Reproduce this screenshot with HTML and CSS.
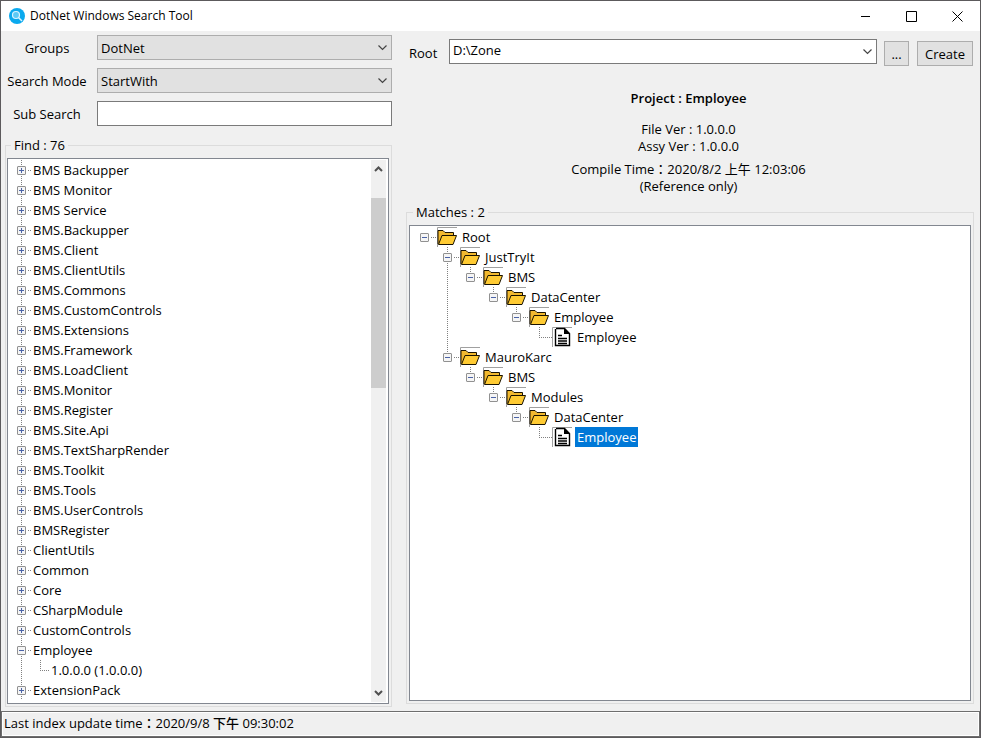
FILE: index.html
```html
<!DOCTYPE html>
<html lang="zh-Hant">
<head>
<meta charset="utf-8">
<title>DotNet Windows Search Tool</title>
<link rel="stylesheet" href="styles.css">
</head>
<body>
<svg class="defs" aria-hidden="true">
  <symbol id="folder" viewBox="0 0 20 20">
    <path d="M0.5 20V0.5H20" fill="none" stroke="#a0a0a0"/>
    <path d="M1 17V3.5H6L8 5.5H16.5V8" fill="#f2b92f" stroke="#1a1300"/>
    <path d="M1.500 17.500L5 8.500H19.500L16 17.500Z" fill="#ffcb33" stroke="#1a1300"/>
  </symbol>
  <symbol id="doc" viewBox="0 0 20 20">
    <path d="M0.5 20V0.5H20" fill="none" stroke="#a0a0a0"/>
    <path d="M4 1.5H12.5L17.5 6.5V18.5H3.5V2" fill="#fff" stroke="#000" stroke-width="1.4"/>
    <path d="M12 1V7H18Z" fill="#000"/>
    <path d="M6 8.5H10M6 11.5H15M6 14H15M6 16.500H15" stroke="#000" stroke-width="1.5"/>
  </symbol>
</svg>
<div class="window">
  <header class="titlebar">
    <svg class="app-icon" viewBox="0 0 16 16"><circle cx="8" cy="8" r="8" fill="#0aa9ee"/><circle cx="7" cy="7" r="3.5" fill="#5cc9f5" stroke="#d8f3ff" stroke-width="1.2"/><path d="M9.5 9.5L13 13" stroke="#d8f3ff" stroke-width="1.5"/></svg>
    <h1>DotNet Windows Search Tool</h1>
    <button class="caption" aria-label="Minimize"><svg viewBox="0 0 11 11"><path d="M1 5.5H10"/></svg></button>
    <button class="caption" aria-label="Maximize"><svg viewBox="0 0 11 11"><path d="M.5 .5H10.5V10.5H.5Z"/></svg></button>
    <button class="caption" aria-label="Close"><svg viewBox="0 0 11 11"><path d="M.5 .5L10.5 10.5M10.5 .5L.5 10.5"/></svg></button>
  </header>
  <main>
    <section class="left">
      <div class="filters">
        <label for="groups">Groups</label>
        <select id="groups"><option>DotNet</option></select>
        <label for="mode">Search Mode</label>
        <select id="mode"><option>StartWith</option></select>
        <label for="sub">Sub Search</label>
        <input id="sub" type="text">
      </div>
      <fieldset>
        <legend>Find : 76</legend>
        <div class="panel">
          <ul class="tree projects">
            <li><div class="row"><button class="toggle plus" aria-label="Expand"></button><span>BMS Backupper</span></div></li>
            <li><div class="row"><button class="toggle plus" aria-label="Expand"></button><span>BMS Monitor</span></div></li>
            <li><div class="row"><button class="toggle plus" aria-label="Expand"></button><span>BMS Service</span></div></li>
            <li><div class="row"><button class="toggle plus" aria-label="Expand"></button><span>BMS.Backupper</span></div></li>
            <li><div class="row"><button class="toggle plus" aria-label="Expand"></button><span>BMS.Client</span></div></li>
            <li><div class="row"><button class="toggle plus" aria-label="Expand"></button><span>BMS.ClientUtils</span></div></li>
            <li><div class="row"><button class="toggle plus" aria-label="Expand"></button><span>BMS.Commons</span></div></li>
            <li><div class="row"><button class="toggle plus" aria-label="Expand"></button><span>BMS.CustomControls</span></div></li>
            <li><div class="row"><button class="toggle plus" aria-label="Expand"></button><span>BMS.Extensions</span></div></li>
            <li><div class="row"><button class="toggle plus" aria-label="Expand"></button><span>BMS.Framework</span></div></li>
            <li><div class="row"><button class="toggle plus" aria-label="Expand"></button><span>BMS.LoadClient</span></div></li>
            <li><div class="row"><button class="toggle plus" aria-label="Expand"></button><span>BMS.Monitor</span></div></li>
            <li><div class="row"><button class="toggle plus" aria-label="Expand"></button><span>BMS.Register</span></div></li>
            <li><div class="row"><button class="toggle plus" aria-label="Expand"></button><span>BMS.Site.Api</span></div></li>
            <li><div class="row"><button class="toggle plus" aria-label="Expand"></button><span>BMS.TextSharpRender</span></div></li>
            <li><div class="row"><button class="toggle plus" aria-label="Expand"></button><span>BMS.Toolkit</span></div></li>
            <li><div class="row"><button class="toggle plus" aria-label="Expand"></button><span>BMS.Tools</span></div></li>
            <li><div class="row"><button class="toggle plus" aria-label="Expand"></button><span>BMS.UserControls</span></div></li>
            <li><div class="row"><button class="toggle plus" aria-label="Expand"></button><span>BMSRegister</span></div></li>
            <li><div class="row"><button class="toggle plus" aria-label="Expand"></button><span>ClientUtils</span></div></li>
            <li><div class="row"><button class="toggle plus" aria-label="Expand"></button><span>Common</span></div></li>
            <li><div class="row"><button class="toggle plus" aria-label="Expand"></button><span>Core</span></div></li>
            <li><div class="row"><button class="toggle plus" aria-label="Expand"></button><span>CSharpModule</span></div></li>
            <li><div class="row"><button class="toggle plus" aria-label="Expand"></button><span>CustomControls</span></div></li>
            <li><div class="row"><button class="toggle" aria-label="Collapse"></button><span>Employee</span></div>
              <ul><li><div class="row leaf"><span>1.0.0.0 (1.0.0.0)</span></div></li></ul>
            </li>
            <li><div class="row"><button class="toggle plus" aria-label="Expand"></button><span>ExtensionPack</span></div></li>
          </ul>
          <div class="scrollbar">
            <button aria-label="Scroll up"><svg viewBox="0 0 9 6"><path d="M1 5L4.500 1.500L8 5"/></svg></button>
            <div class="track"><div class="thumb"></div></div>
            <button aria-label="Scroll down"><svg viewBox="0 0 9 6"><path d="M1 1L4.500 4.500L8 1"/></svg></button>
          </div>
        </div>
      </fieldset>
    </section>
    <section class="right">
      <div class="root-bar">
        <label for="root">Root</label>
        <select id="root" class="editable"><option>D:\Zone</option></select>
        <button class="btn">...</button>
        <button class="btn create">Create</button>
      </div>
      <div class="info">
        <h2>Project : Employee</h2>
        <p>File Ver : 1.0.0.0</p>
        <p class="last">Assy Ver : 1.0.0.0</p>
        <p>Compile Time：2020/8/2 上午 12:03:06</p>
        <p class="last">(Reference only)</p>
      </div>
      <fieldset>
        <legend>Matches : 2</legend>
        <div class="panel">
          <ul class="tree matches">
            <li><div class="row"><button class="toggle" aria-label="Collapse"></button><svg><use href="#folder"/></svg><span>Root</span></div>
              <ul>
                <li><div class="row"><button class="toggle" aria-label="Collapse"></button><svg><use href="#folder"/></svg><span>JustTryIt</span></div>
                  <ul><li><div class="row"><button class="toggle" aria-label="Collapse"></button><svg><use href="#folder"/></svg><span>BMS</span></div>
                    <ul><li><div class="row"><button class="toggle" aria-label="Collapse"></button><svg><use href="#folder"/></svg><span>DataCenter</span></div>
                      <ul><li><div class="row"><button class="toggle" aria-label="Collapse"></button><svg><use href="#folder"/></svg><span>Employee</span></div>
                        <ul><li><div class="row leaf"><svg><use href="#doc"/></svg><span>Employee</span></div></li></ul>
                      </li></ul>
                    </li></ul>
                  </li></ul>
                </li>
                <li><div class="row"><button class="toggle" aria-label="Collapse"></button><svg><use href="#folder"/></svg><span>MauroKarc</span></div>
                  <ul><li><div class="row"><button class="toggle" aria-label="Collapse"></button><svg><use href="#folder"/></svg><span>BMS</span></div>
                    <ul><li><div class="row"><button class="toggle" aria-label="Collapse"></button><svg><use href="#folder"/></svg><span>Modules</span></div>
                      <ul><li><div class="row"><button class="toggle" aria-label="Collapse"></button><svg><use href="#folder"/></svg><span>DataCenter</span></div>
                        <ul><li><div class="row leaf"><svg><use href="#doc"/></svg><span class="selected">Employee</span></div></li></ul>
                      </li></ul>
                    </li></ul>
                  </li></ul>
                </li>
              </ul>
            </li>
          </ul>
        </div>
      </fieldset>
    </section>
  </main>
  <footer>Last index update time：2020/9/8 下午 09:30:02</footer>
</div>
</body>
</html>
```
FILE: styles.css
```css
* { box-sizing: border-box; }
body, h1, h2, p, ul { margin: 0; padding: 0; }
body, button, input, select {
  font: 13px/18px "Open Sans", "Noto Sans CJK TC", sans-serif;
  color: #000;
}
button { padding: 0; }
ul { list-style: none; }
.defs { display: none; }

.window {
  display: flex;
  flex-direction: column;
  height: 100vh;
  background: #f0f0f0;
  border: 1px solid #5c5a5c;
}

.titlebar {
  display: flex;
  align-items: center;
  height: 30px;
  padding-left: 8px;
  background: #fff;
}
.app-icon { width: 16px; height: 16px; margin-right: 5px; }
h1 { flex: 1; font-size: 12px; font-weight: 400; }
.caption {
  display: grid;
  place-items: center;
  width: 46px;
  height: 30px;
  border: 0;
  background: none;
}
.caption svg { width: 11px; height: 11px; fill: none; stroke: #000; }

main {
  flex: 1;
  display: grid;
  grid-template-columns: 391px 1fr;
  column-gap: 14px;
  min-height: 0;
  padding-right: 6px;
}
section { display: flex; flex-direction: column; min-height: 0; }
.left { padding: 4px 0 4px 4px; }
.right { padding: 8px 0 7px; }

.filters {
  display: grid;
  grid-template-columns: 84px 1fr;
  grid-auto-rows: 25px;
  gap: 8px;
  align-items: center;
  margin-bottom: 10px;
}
.filters label { text-align: center; white-space: nowrap; }
select, input {
  appearance: none;
  width: 100%;
  height: 25px;
  margin: 0;
  padding: 0 3px;
  border: 1px solid #adadad;
  border-radius: 0;
  background: #e1e1e1 url("data:image/svg+xml,%3Csvg xmlns='http://www.w3.org/2000/svg' width='9' height='6'%3E%3Cpath d='M.5 .5L4.500 4.500L8.500 .5' fill='none' stroke='%23444' stroke-width='1.2'/%3E%3C/svg%3E") no-repeat right 4px center;
}
input, .editable { border-color: #7a7a7a; background-color: #fff; }
input { background-image: none; }

fieldset {
  flex: 1;
  display: flex;
  min-width: 0;
  min-height: 0;
  margin: 0;
  padding: 4px 2px 2px;
  border: 1px solid #dcdcdc;
}
.left fieldset { padding-left: 1px; }
legend { margin-left: 4px; padding: 0 3px; }
.panel {
  flex: 1;
  display: flex;
  min-width: 0;
  padding: 1px 2px 1px 0;
  border: 1px solid #828790;
  background: #fff;
}

.tree { flex: 1; padding-left: 10px; }
.tree li { position: relative; }
.tree li::before {
  content: "";
  position: absolute;
  left: 4px;
  top: 0;
  bottom: 0;
  width: 1px;
  background: repeating-linear-gradient(#808080 0 1px, transparent 1px 2px);
}
.tree ul li:last-child::before { bottom: auto; height: 10px; }
.matches > li::before { display: none; }
.row {
  position: relative;
  display: flex;
  align-items: center;
  height: 20px;
}
.row::before {
  content: "";
  order: 1;
  width: 6px;
  height: 1px;
  margin-left: 2px;
  background: repeating-linear-gradient(90deg, #808080 0 1px, transparent 1px 2px);
}
.row svg { order: 2; width: 20px; height: 20px; margin-right: 3px; }
.row span { order: 3; padding: 0 2px; line-height: 20px; }
.row .selected { background: #0078d7; color: #fff; }
.leaf::before { width: 13px; margin-left: 4px; }
.toggle {
  width: 9px;
  height: 9px;
  border: 1px solid #919191;
  border-radius: 1px;
  background: linear-gradient(#4b63a7, #4b63a7) center / 5px 1px no-repeat, #f5f5f5;
}
.plus {
  background: linear-gradient(#4b63a7, #4b63a7) center / 5px 1px no-repeat,
    linear-gradient(#4b63a7, #4b63a7) center / 1px 5px no-repeat, #f5f5f5;
}
.matches ul { padding-left: 23px; }
.projects { padding-left: 9px; }
.projects ul { padding-left: 19px; }
.projects .row::before { width: 3px; }
.projects .leaf::before { width: 9px; }

.scrollbar {
  display: flex;
  flex-direction: column;
  width: 15px;
  background: #f0f0f0;
}
.scrollbar button {
  display: grid;
  place-items: center;
  height: 18px;
  border: 0;
  background: none;
}
.scrollbar svg { width: 9px; height: 6px; fill: none; stroke: #505050; stroke-width: 2; }
.track { flex: 1; padding-top: 20px; }
.thumb { height: 39%; background: #cdcdcd; }

.root-bar { display: flex; align-items: flex-start; height: 27px; padding-right: 1px; }
.root-bar label { width: 43px; padding: 5px 0 0 3px; }
.root-bar .editable { flex: 1; min-width: 0; padding-bottom: 3px; }
.btn {
  width: 25px;
  height: 25px;
  margin: 2px 0 0 7px;
  border: 1px solid #adadad;
  background: #e1e1e1;
}
.create { width: 56px; margin-left: 8px; }
.info { padding: 24px 3px 2px 0; text-align: center; line-height: 17px; }
h2 { margin-bottom: 14px; font-size: 13px; font-weight: 600; line-height: 17px; }
.info .last { margin-bottom: 6px; }

footer {
  height: 26px;
  padding: 0 2px;
  border: 1px solid #6e6e6e;
  box-shadow: inset 0 0 0 1px #fff;
  font-weight: 500;
  line-height: 22px;
}
```
